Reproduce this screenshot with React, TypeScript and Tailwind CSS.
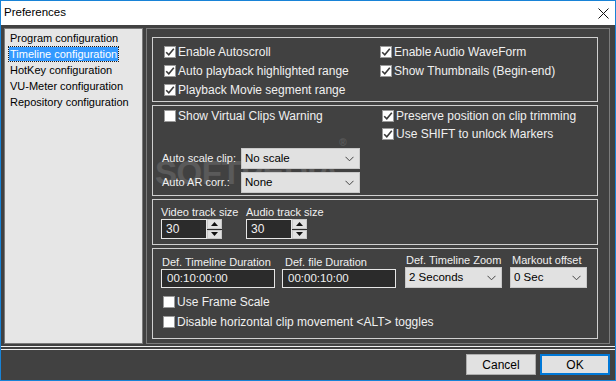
import React from "react";

const FONT = "font-['Liberation_Sans',Arial,sans-serif]";

// Windows-style checkbox with label
function Check({ label, checked, h = "h-[19px]" }: { label: string; checked?: boolean; h?: string }) {
  return (
    <div className={`flex items-center ${h}`}>
      <span className="w-[12px] h-[12px] bg-white border border-[#9a9a9a] flex items-center justify-center shrink-0">
        {checked && (
          <svg width="10" height="10" viewBox="0 0 10 10">
            <path d="M1.2 5.2 L3.8 7.8 L8.8 1.8" fill="none" stroke="#3a3a3a" strokeWidth="1.6" />
          </svg>
        )}
      </span>
      <span className="ml-[2px] text-[12px] text-[#f0f0f0] whitespace-nowrap">{label}</span>
    </div>
  );
}

function Chevron() {
  return (
    <svg width="9" height="6" viewBox="0 0 9 6" className="shrink-0">
      <path d="M0.5 0.8 L4.5 4.8 L8.5 0.8" fill="none" stroke="#444" strokeWidth="1" />
    </svg>
  );
}

function Select({ value, w, h = "h-[21px]" }: { value: string; w: string; h?: string }) {
  return (
    <div className={`${w} ${h} bg-[#e1e1e1] border border-[#c8c8c8] flex items-center justify-between pl-[3px] pr-[5px]`}>
      <span className="text-[11.5px] text-black whitespace-nowrap">{value}</span>
      <Chevron />
    </div>
  );
}

function Spinner({ value }: { value: string }) {
  return (
    <div className="flex h-[20px]">
      <div className="w-[46px] h-full bg-[#2b2b2b] border border-[#e6e6e6] flex items-center pl-[4px] text-[12px] text-[#f0f0f0]">
        {value}
      </div>
      <div className="w-[15px] h-full flex flex-col gap-[1px] bg-[#2b2b2b]">
        <div className="flex-1 bg-[#e1e1e1] border border-[#c8c8c8] flex items-center justify-center">
          <svg width="7" height="4" viewBox="0 0 7 4"><path d="M0 4 L3.5 0 L7 4 Z" fill="#111" /></svg>
        </div>
        <div className="flex-1 bg-[#e1e1e1] border border-[#c8c8c8] flex items-center justify-center">
          <svg width="7" height="4" viewBox="0 0 7 4"><path d="M0 0 L3.5 4 L7 0 Z" fill="#111" /></svg>
        </div>
      </div>
    </div>
  );
}

function TextBox({ value, w }: { value: string; w: string }) {
  return (
    <div className={`${w} h-[19px] bg-[#2b2b2b] border border-[#e6e6e6] flex items-center pl-[5px] text-[11.5px] text-[#f0f0f0]`}>
      {value}
    </div>
  );
}

const Label = ({ children, className = "" }: { children: React.ReactNode; className?: string }) => (
  <div className={`text-[11px] text-[#f0f0f0] whitespace-nowrap leading-none ${className}`}>{children}</div>
);

const listItems = [
  "Program configuration",
  "Timeline configuration",
  "HotKey configuration",
  "VU-Meter configuration",
  "Repository configuration",
];

export default function App() {
  return (
    <div className={`${FONT} w-[616px] h-[381px] border border-[#1883d7] flex flex-col bg-[#414141] overflow-hidden`}>
      {/* title bar */}
      <div className="h-[24px] bg-white flex items-center justify-between pl-[3px] pr-[6px] shrink-0">
        <span className="text-[11.5px] text-black">Preferences</span>
        <svg width="11" height="11" viewBox="0 0 11 11">
          <path d="M0.5 0.5 L10.5 10.5 M10.5 0.5 L0.5 10.5" stroke="#111" strokeWidth="1" />
        </svg>
      </div>

      <div className="flex flex-col pt-[3px]">
        {/* content row */}
        <div className="h-[316px] flex pl-[3px] pr-[5px] gap-[3px]">
          {/* left list */}
          <div className="w-[139px] h-full bg-[#e6e6e6] border border-[#7a7a7a] pt-[1px] pl-[4px]">
            {listItems.map((item, i) => (
              <div key={item} className="h-[16px] flex items-center">
                <span
                  className={`text-[11px] leading-[14px] px-[1px] ${
                    i === 1
                      ? "bg-[#3399ff] text-white outline outline-1 outline-dotted outline-[#1a1a1a]"
                      : "text-black"
                  }`}
                >
                  {item}
                </span>
              </div>
            ))}
          </div>

          {/* main panel */}
          <div className="flex-1 h-full border border-[#7c7c7c] pt-[8px] pl-[5px] pr-[11px] pb-[4px] flex flex-col gap-[3px]">
            {/* group 1 */}
            <div className="h-[65px] border border-[#d0d0d0] pt-[4px] pl-[11px] grid grid-cols-[216px_1fr]">
              <div className="flex flex-col">
                <Check label="Enable Autoscroll" checked />
                <Check label="Auto playback highlighted range" checked />
                <Check label="Playback Movie segment range" checked />
              </div>
              <div className="flex flex-col">
                <Check label="Enable Audio WaveForm" checked />
                <Check label="Show Thumbnails (Begin-end)" checked />
              </div>
            </div>

            {/* group 2 */}
            <div className="h-[91px] border border-[#d0d0d0] pt-[1px] pl-[9px] flex flex-col relative">
              {/* watermark */}
              <div className="absolute left-[2px] top-[42px] text-[33px] font-bold tracking-[-0.5px] text-white/[0.13] pointer-events-none select-none">
                SOFTPEDIA<sup className="text-[10px] align-top">®</sup>
              </div>
              <div className="grid grid-cols-[218px_1fr] pl-[2px] relative">
                <div className="flex flex-col">
                  <Check label="Show Virtual Clips Warning" h="h-[18px]" />
                </div>
                <div className="flex flex-col">
                  <Check label="Preserve position on clip trimming" checked h="h-[18px]" />
                  <Check label="Use SHIFT to unlock Markers" checked h="h-[18px]" />
                </div>
              </div>
              <div className="mt-[5px] flex items-center relative">
                <Label className="w-[79px]">Auto scale clip:</Label>
                <Select value="No scale" w="w-[119px]" />
              </div>
              <div className="mt-[3px] flex items-center relative">
                <Label className="w-[79px]">Auto AR corr.:</Label>
                <Select value="None" w="w-[119px]" />
              </div>
            </div>

            {/* group 3 */}
            <div className="h-[46px] border border-[#d0d0d0] pt-[5px] pl-[8px] flex">
              <div className="w-[85px] flex flex-col">
                <Label className="h-[14px] flex items-center">Video track size</Label>
                <Spinner value="30" />
              </div>
              <div className="flex flex-col">
                <Label className="h-[14px] flex items-center">Audio track size</Label>
                <Spinner value="30" />
              </div>
            </div>

            {/* group 4 */}
            <div className="h-[91px] border border-[#d0d0d0] pt-[5px] pl-[8px] flex flex-col">
              <div className="flex items-end">
                <div className="w-[114px] flex flex-col">
                  <Label className="h-[14px] flex items-center pl-[1px]">Def. Timeline Duration</Label>
                  <TextBox value="00:10:00:00" w="w-[114px]" />
                </div>
                <div className="ml-[7px] w-[114px] flex flex-col">
                  <Label className="h-[14px] flex items-center pl-[3px]">Def. file Duration</Label>
                  <TextBox value="00:00:10:00" w="w-[114px]" />
                </div>
                <div className="ml-[9px] w-[97px] flex flex-col">
                  <Label className="h-[13px] flex items-center pl-[1px]">Def. Timeline Zoom</Label>
                  <Select value="2 Seconds" w="w-[97px]" />
                </div>
                <div className="ml-[8px] w-[77px] flex flex-col">
                  <Label className="h-[13px] flex items-center pl-[2px]">Markout offset</Label>
                  <Select value="0 Sec" w="w-[77px]" />
                </div>
              </div>
              <div className="mt-[4px] pl-[2px] flex flex-col">
                <Check label="Use Frame Scale" h="h-[20px]" />
                <Check label="Disable horizontal clip movement  <ALT> toggles" h="h-[20px]" />
              </div>
            </div>
          </div>
        </div>

        {/* separator */}
        <div className="mt-[2px] h-[4px] border-y border-[#f0f0f0]" />

        {/* buttons */}
        <div className="mt-[4px] h-[21px] flex justify-end gap-[4px] pr-[5px]">
          <button className="w-[70px] h-full bg-[#e1e1e1] border border-[#adadad] text-[12px] text-black">
            Cancel
          </button>
          <button className="w-[70px] h-full bg-[#e1e1e1] border-2 border-[#0078d7] text-[12px] text-black">
            OK
          </button>
        </div>
      </div>
    </div>
  );
}
